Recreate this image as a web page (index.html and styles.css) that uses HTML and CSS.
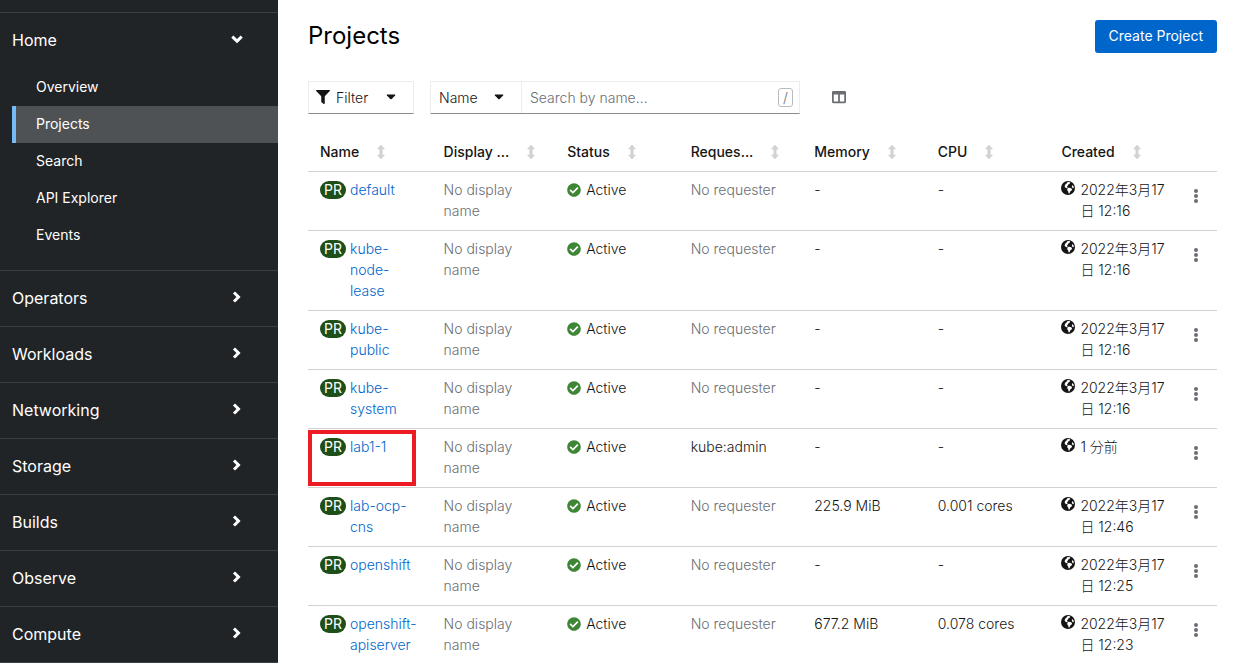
FILE: index.html
```
<!DOCTYPE html>
<html lang="en">
<head>
<meta charset="utf-8">
<title>Projects</title>
<meta name="viewport" content="width=device-width, initial-scale=1">
<link rel="stylesheet" href="styles.css">
</head>
<body>
<svg class="sprite" aria-hidden="true">
  <symbol id="i-right" viewBox="0 0 12 12"><path d="M3 1.500 7.500 6l-4.500 4.500" fill="none" stroke="currentColor" stroke-width="3"/></symbol>
  <symbol id="i-down" viewBox="0 0 12 12"><path d="M1.300 3.700 6 8.200l4.700-4.500" fill="none" stroke="currentColor" stroke-width="3"/></symbol>
  <symbol id="i-sort" viewBox="0 0 8 14"><path d="M4 0 7.500 4H5.200v6h2.300L4 14 .5 10h2.300V4H.5z" fill="currentColor" stroke="currentColor" stroke-width=".6" stroke-linejoin="round"/></symbol>
  <symbol id="i-caret" viewBox="0 0 10 6"><path d="M1.200.5h7.600q.9.200.3 1L5.700 5q-.7.600-1.400 0L.9 1.500Q.3.700 1.200.5z" fill="currentColor"/></symbol>
  <symbol id="i-filter" viewBox="0 0 512 512"><path d="M487.976 0H24.028C2.710 0-8.047 25.866 7.058 40.971L192 225.941V432c0 7.831 3.821 15.170 10.237 19.662l80 55.980C298.020 518.690 320 507.493 320 487.980V225.941l184.947-184.970C520.021 25.896 509.338 0 487.976 0z" fill="currentColor"/></symbol>
  <symbol id="i-columns" viewBox="0 0 512 512"><path d="M464 32H48C21.490 32 0 53.490 0 80v352c0 26.510 21.490 48 48 48h416c26.510 0 48-21.490 48-48V80c0-26.510-21.490-48-48-48zM224 416H64V160h160v256zm224 0H288V160h160v256z" fill="currentColor"/></symbol>
  <symbol id="i-check" viewBox="0 0 512 512"><path d="M504 256c0 136.967-111.033 248-248 248S8 392.967 8 256 119.033 8 256 8s248 111.033 248 248zM227.314 387.314l184-184c6.248-6.248 6.248-16.379 0-22.627l-22.627-22.627c-6.248-6.249-16.379-6.249-22.628 0L216 308.118l-70.059-70.059c-6.248-6.248-16.379-6.248-22.628 0l-22.627 22.627c-6.248 6.248-6.248 16.379 0 22.627l104 104c6.249 6.249 16.379 6.249 22.628.001z" fill="currentColor"/></symbol>
  <symbol id="i-globe" viewBox="0 0 14 14"><circle cx="7" cy="7" r="7" fill="currentColor"/><path d="M6.300 1.300 8 1l1.300.6-.9 1.300-1.200.5-.3 1.300-1.100.4.900 1.200-.8 1-1.400-.5-.9-1.400.5-1.700 1.500-1.200zM7.600 6.700l1.900.2 1.600 1.100-.5 1.500-1.400 1.100-.6 1.700-1 .3-.4-2-1-1.300.2-1.700zM11.300 4l1.200 1.300.3 1.700-.9.200-1.100-1.300z" fill="#fff"/></symbol>
  <symbol id="i-kebab" viewBox="0 0 4 14"><circle cx="2" cy="2" r="2" fill="currentColor"/><circle cx="2" cy="7" r="2" fill="currentColor"/><circle cx="2" cy="12" r="2" fill="currentColor"/></symbol>
</svg>
<div class="app">
  <nav class="sidebar" aria-label="Main">
    <section class="nav-group">
      <button class="nav-toggle" type="button" aria-expanded="true">Home<svg class="chevron"><use href="#i-down"/></svg></button>
      <ul class="nav-list">
        <li><a class="nav-link" href="#">Overview</a></li>
        <li><a class="nav-link current" href="#" aria-current="page">Projects</a></li>
        <li><a class="nav-link" href="#">Search</a></li>
        <li><a class="nav-link" href="#">API Explorer</a></li>
        <li><a class="nav-link" href="#">Events</a></li>
      </ul>
    </section>
    <section class="nav-group"><button class="nav-toggle" type="button">Operators<svg class="chevron"><use href="#i-right"/></svg></button></section>
    <section class="nav-group"><button class="nav-toggle" type="button">Workloads<svg class="chevron"><use href="#i-right"/></svg></button></section>
    <section class="nav-group"><button class="nav-toggle" type="button">Networking<svg class="chevron"><use href="#i-right"/></svg></button></section>
    <section class="nav-group"><button class="nav-toggle" type="button">Storage<svg class="chevron"><use href="#i-right"/></svg></button></section>
    <section class="nav-group"><button class="nav-toggle" type="button">Builds<svg class="chevron"><use href="#i-right"/></svg></button></section>
    <section class="nav-group"><button class="nav-toggle" type="button">Observe<svg class="chevron"><use href="#i-right"/></svg></button></section>
    <section class="nav-group last"><button class="nav-toggle" type="button">Compute<svg class="chevron"><use href="#i-right"/></svg></button></section>
  </nav>
  <main class="content">
    <header class="page-head">
      <h1>Projects</h1>
      <button class="primary" type="button">Create Project</button>
    </header>
    <div class="toolbar">
      <button class="box filter" type="button"><svg class="icon"><use href="#i-filter"/></svg>Filter<svg class="caret"><use href="#i-caret"/></svg></button>
      <div class="box search">
        <button class="field" type="button">Name<svg class="caret"><use href="#i-caret"/></svg></button>
        <input type="text" placeholder="Search by name..." aria-label="Search by name">
        <kbd>/</kbd>
      </div>
      <button class="plain" type="button" aria-label="Manage columns"><svg class="icon"><use href="#i-columns"/></svg></button>
    </div>
    <table class="projects">
      <colgroup><col><col><col><col><col><col><col><col class="actions-col"></colgroup>
      <thead>
        <tr>
          <th><button type="button"><span>Name</span><svg class="sort"><use href="#i-sort"/></svg></button></th>
          <th><button type="button"><span>Display ...</span><svg class="sort"><use href="#i-sort"/></svg></button></th>
          <th><button type="button"><span>Status</span><svg class="sort"><use href="#i-sort"/></svg></button></th>
          <th><button type="button"><span>Reques...</span><svg class="sort"><use href="#i-sort"/></svg></button></th>
          <th><button type="button"><span>Memory</span><svg class="sort"><use href="#i-sort"/></svg></button></th>
          <th><button type="button"><span>CPU</span><svg class="sort"><use href="#i-sort"/></svg></button></th>
          <th><button type="button"><span>Created</span><svg class="sort"><use href="#i-sort"/></svg></button></th>
          <td></td>
        </tr>
      </thead>
      <tbody>
        <tr>
          <td><div class="name"><span class="badge">PR</span><a href="#">default</a></div></td>
          <td class="muted">No display name</td>
          <td><div class="status"><svg class="icon"><use href="#i-check"/></svg>Active</div></td>
          <td class="muted">No requester</td><td>-</td><td>-</td>
          <td><div class="date"><svg class="icon"><use href="#i-globe"/></svg><span>2022年3月17<br>日 12:16</span></div></td>
          <td><button class="kebab" type="button" aria-label="Actions"><svg><use href="#i-kebab"/></svg></button></td>
        </tr>
        <tr>
          <td><div class="name"><span class="badge">PR</span><a href="#">kube-<br>node-<br>lease</a></div></td>
          <td class="muted">No display name</td>
          <td><div class="status"><svg class="icon"><use href="#i-check"/></svg>Active</div></td>
          <td class="muted">No requester</td><td>-</td><td>-</td>
          <td><div class="date"><svg class="icon"><use href="#i-globe"/></svg><span>2022年3月17<br>日 12:16</span></div></td>
          <td><button class="kebab" type="button" aria-label="Actions"><svg><use href="#i-kebab"/></svg></button></td>
        </tr>
        <tr>
          <td><div class="name"><span class="badge">PR</span><a href="#">kube-public</a></div></td>
          <td class="muted">No display name</td>
          <td><div class="status"><svg class="icon"><use href="#i-check"/></svg>Active</div></td>
          <td class="muted">No requester</td><td>-</td><td>-</td>
          <td><div class="date"><svg class="icon"><use href="#i-globe"/></svg><span>2022年3月17<br>日 12:16</span></div></td>
          <td><button class="kebab" type="button" aria-label="Actions"><svg><use href="#i-kebab"/></svg></button></td>
        </tr>
        <tr>
          <td><div class="name"><span class="badge">PR</span><a href="#">kube-system</a></div></td>
          <td class="muted">No display name</td>
          <td><div class="status"><svg class="icon"><use href="#i-check"/></svg>Active</div></td>
          <td class="muted">No requester</td><td>-</td><td>-</td>
          <td><div class="date"><svg class="icon"><use href="#i-globe"/></svg><span>2022年3月17<br>日 12:16</span></div></td>
          <td><button class="kebab" type="button" aria-label="Actions"><svg><use href="#i-kebab"/></svg></button></td>
        </tr>
        <tr>
          <td class="marked"><div class="name"><span class="badge">PR</span><a href="#">lab1-1</a></div></td>
          <td class="muted">No display name</td>
          <td><div class="status"><svg class="icon"><use href="#i-check"/></svg>Active</div></td>
          <td>kube:admin</td><td>-</td><td>-</td>
          <td><div class="date"><svg class="icon"><use href="#i-globe"/></svg><span>1 分前</span></div></td>
          <td><button class="kebab" type="button" aria-label="Actions"><svg><use href="#i-kebab"/></svg></button></td>
        </tr>
        <tr>
          <td><div class="name"><span class="badge">PR</span><a href="#">lab-ocp-cns</a></div></td>
          <td class="muted">No display name</td>
          <td><div class="status"><svg class="icon"><use href="#i-check"/></svg>Active</div></td>
          <td class="muted">No requester</td><td>225.9 MiB</td><td>0.001 cores</td>
          <td><div class="date"><svg class="icon"><use href="#i-globe"/></svg><span>2022年3月17<br>日 12:46</span></div></td>
          <td><button class="kebab" type="button" aria-label="Actions"><svg><use href="#i-kebab"/></svg></button></td>
        </tr>
        <tr>
          <td><div class="name"><span class="badge">PR</span><a href="#">openshift</a></div></td>
          <td class="muted">No display name</td>
          <td><div class="status"><svg class="icon"><use href="#i-check"/></svg>Active</div></td>
          <td class="muted">No requester</td><td>-</td><td>-</td>
          <td><div class="date"><svg class="icon"><use href="#i-globe"/></svg><span>2022年3月17<br>日 12:25</span></div></td>
          <td><button class="kebab" type="button" aria-label="Actions"><svg><use href="#i-kebab"/></svg></button></td>
        </tr>
        <tr>
          <td><div class="name"><span class="badge">PR</span><a href="#">openshift-apiserver</a></div></td>
          <td class="muted">No display name</td>
          <td><div class="status"><svg class="icon"><use href="#i-check"/></svg>Active</div></td>
          <td class="muted">No requester</td><td>677.2 MiB</td><td>0.078 cores</td>
          <td><div class="date"><svg class="icon"><use href="#i-globe"/></svg><span>2022年3月17<br>日 12:23</span></div></td>
          <td><button class="kebab" type="button" aria-label="Actions"><svg><use href="#i-kebab"/></svg></button></td>
        </tr>
      </tbody>
    </table>
  </main>
</div>
</body>
</html>
```
FILE: styles.css
```
*, *::before, *::after { box-sizing: border-box; }
body {
  margin: 0;
  font: 300 14px/21px Inter, "Noto Sans CJK JP", sans-serif;
  color: #151515;
  background: #fff;
}
button, input { font: inherit; color: inherit; margin: 0; padding: 0; border: 0; background: none; text-align: left; }
button { cursor: pointer; }
a { text-decoration: none; }
svg { display: block; flex: none; }
.sprite { position: absolute; width: 0; height: 0; }
.icon { width: 14px; height: 14px; }

.app { display: flex; height: 100vh; overflow: hidden; }

.sidebar {
  flex: none;
  width: 278px;
  padding-top: 12px;
  background: #212427;
  color: #fff;
  font-weight: 400;
}
.nav-group { border-top: 1px solid #3c3f42; }
.nav-group.last { border-bottom: 1px solid #3c3f42; }
.nav-toggle {
  display: flex;
  align-items: center;
  justify-content: space-between;
  width: 100%;
  height: 55px;
  padding: 0 35px 2px 12px;
  font-size: 16px;
  line-height: 24px;
}
.chevron { width: 12px; height: 12px; margin-bottom: 2px; }
.nav-list { list-style: none; margin: 0; padding: 1px 0 16px 12px; }
.nav-link { display: block; padding: 7px 0 9px 24px; color: #fff; }
.nav-link.current { padding-left: 20px; border-left: 4px solid #73bcf7; background: #4f5255; }

.content { flex: 1; min-width: 0; padding: 20px 25px 0 30px; }
.page-head { display: flex; justify-content: space-between; align-items: flex-start; margin-bottom: 28px; }
h1 { margin: 0; font-size: 24px; line-height: 31px; font-weight: 400; color: #000; }
.primary { padding: 5px 14px 7px; border-radius: 3px; background: #06c; color: #fff; font-weight: 400; }

.toolbar { display: flex; align-items: center; gap: 16px; margin-bottom: 20px; }
.box { height: 33px; border: 1px solid #ededed; border-bottom-color: #8a8d90; }
.caret { width: 10px; height: 6px; }
.filter { display: flex; align-items: center; gap: 6px; width: 106px; padding: 0 17px 1px 7px; }
.filter .caret, .field .caret { margin-left: auto; }
.search { display: flex; align-items: center; width: 370px; padding-right: 6px; }
.field { display: flex; align-items: center; flex: none; width: 91px; height: 100%; padding: 0 17px 1px 8px; border-right: 1px solid #ededed; }
.search input { flex: 1; min-width: 0; height: 100%; padding: 0 8px 1px; outline: 0; }
.search input::placeholder { color: #6a6e73; opacity: 1; }
kbd {
  width: 15px;
  border: 1px solid #b8bbbe;
  border-radius: 3px;
  font: inherit;
  line-height: 17px;
  text-align: center;
  color: #6a6e73;
}
.plain { padding: 7px 16px 9px; color: #6a6e73; }

.projects { width: 100%; table-layout: fixed; border-collapse: separate; border-spacing: 0; }
.actions-col { width: 44px; }
th, td { padding: 7px 12px 9px; border-bottom: 1px solid #d2d2d2; vertical-align: top; text-align: left; font-weight: inherit; }
th { padding-right: 0; font-weight: 500; }
th button { display: flex; align-items: center; gap: 18px; white-space: nowrap; }
.sort { width: 8px; height: 14px; color: #d2d2d2; }
tbody td:nth-child(2) { padding-right: 24px; }
.muted { color: #6a6e73; }
.name { display: flex; align-items: flex-start; gap: 4px; }
.name a { color: #06c; }
.badge {
  flex: none;
  width: 26px;
  margin-top: 2px;
  border-radius: 9px;
  background: #1e4f18;
  color: #fff;
  font-weight: 400;
  line-height: 18px;
  text-align: center;
}
.status { display: flex; align-items: center; gap: 5px; }
.status .icon { color: #3e8635; }
.date { display: flex; gap: 5px; white-space: nowrap; }
.date .icon { margin-top: 2px; }
td:last-child { padding-left: 2px; padding-right: 0; }
.kebab { display: block; margin: 9px auto 0; padding: 1px 8px; color: #6a6e73; }
.kebab svg { width: 4px; height: 14px; }
.marked { position: relative; }
.marked::after {
  content: "";
  position: absolute;
  top: 1px;
  left: 0;
  width: 108px;
  height: 56px;
  border: 4px solid #ed1c24;
}
```
